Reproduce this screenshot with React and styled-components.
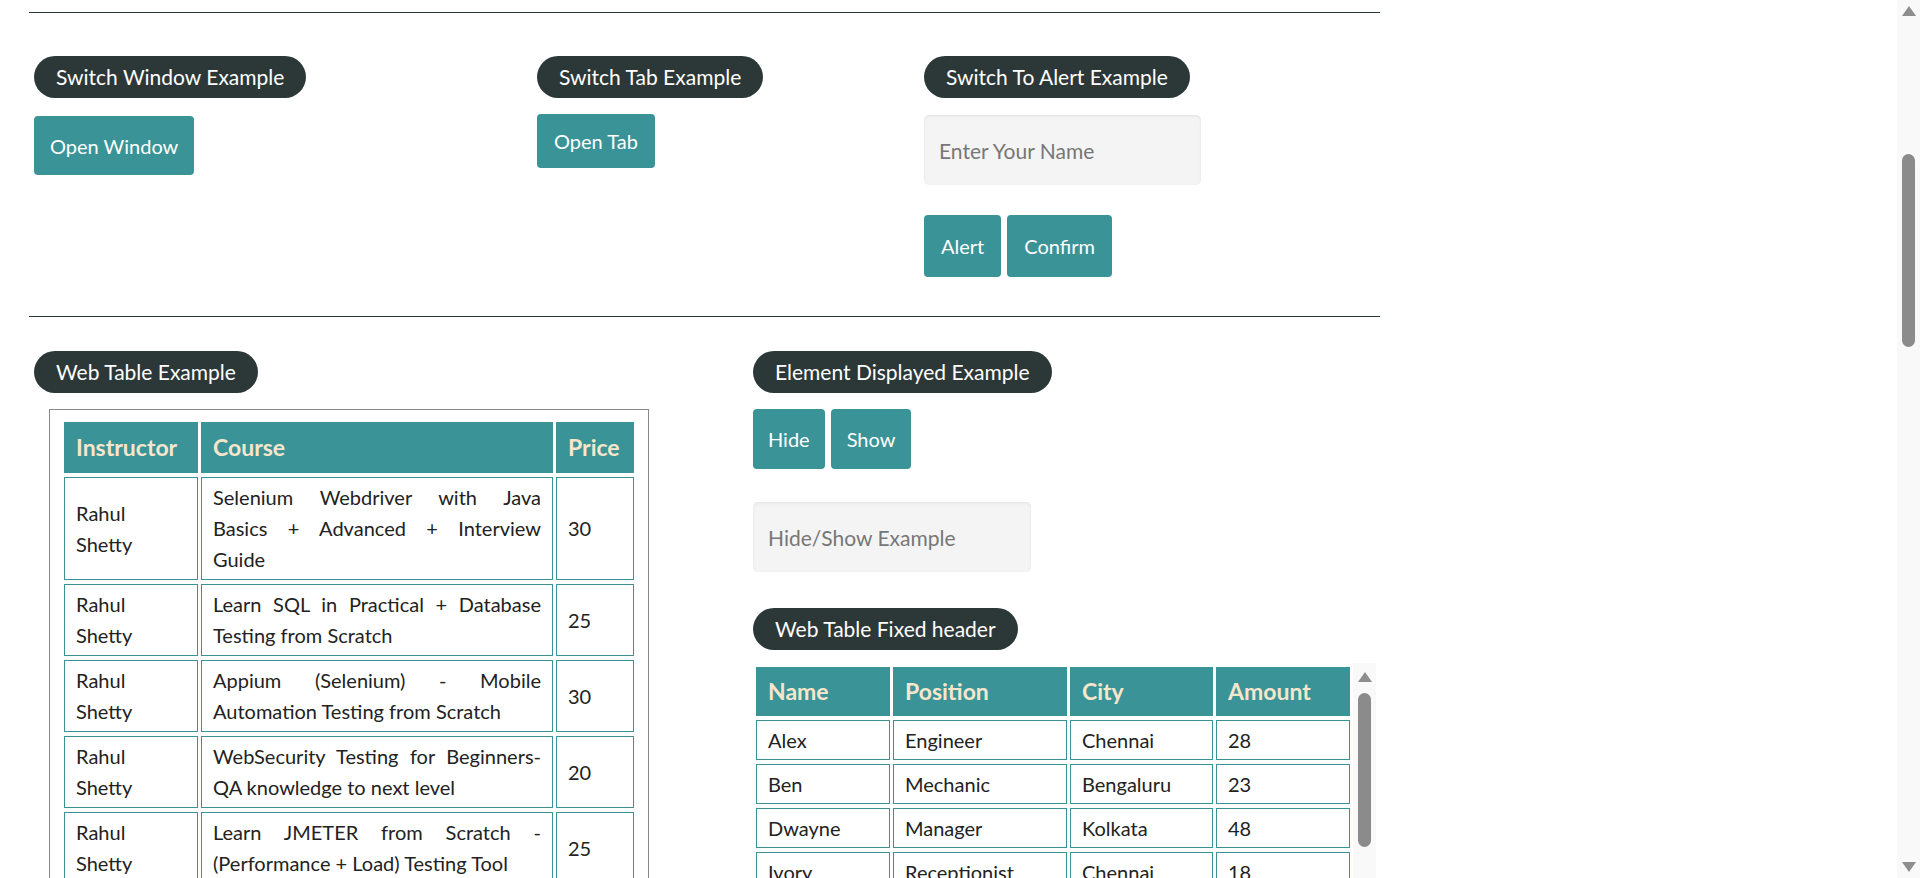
import React from 'react';
import styled, { createGlobalStyle } from 'styled-components';

const GlobalStyle = createGlobalStyle`
  html, body {
    margin: 0;
    padding: 0;
    background: #fff;
  }
  body {
    font-family: Lato, "Liberation Sans", sans-serif;
    font-size: 20px;
    line-height: 31px;
    color: #222;
  }
  * { box-sizing: border-box; }
`;

const Page = styled.div`
  padding: 12px 0 0 29px;
`;

const Container = styled.div`
  width: 1351px;
`;

const Divider = styled.hr`
  margin: 0;
  border: 0;
  border-top: 1px solid #2c3838;
`;

const Section = styled.div`
  display: grid;
  grid-template-columns: ${p => p.$cols};
  align-items: start;
  padding: ${p => p.$pad};
`;

const Column = styled.div`
  display: flex;
  flex-direction: column;
  align-items: flex-start;
`;

const Legend = styled.span`
  display: inline-block;
  height: 42px;
  line-height: 42px;
  padding: 0 22px;
  border-radius: 21px;
  background: #2c3838;
  color: #fff;
  font-size: 21px;
  white-space: nowrap;
  margin-top: ${p => p.$top || 0}px;
`;

const Button = styled.button`
  font-family: inherit;
  font-size: 20px;
  color: #fff;
  background: #399397;
  border: 0;
  border-radius: 4px;
  padding: 0 ${p => p.$px || 15}px;
  height: ${p => p.$h}px;
  cursor: pointer;
`;

const ButtonRow = styled.div`
  display: flex;
  gap: 6px;
  margin-top: ${p => p.$top || 0}px;
`;

const Spaced = styled.div`
  margin-top: ${p => p.$top}px;
`;

const TextInput = styled.input`
  display: block;
  width: ${p => p.$w}px;
  height: 70px;
  margin-top: ${p => p.$top}px;
  padding: 0 15px;
  border: 0;
  border-radius: 5px;
  background: #f4f4f4;
  box-shadow: inset 0 1px 3px rgba(0, 0, 0, 0.08);
  font-family: inherit;
  font-size: 21px;
  color: #222;
  outline: none;
  &::placeholder { color: #777; }
`;

const TableBox = styled.div`
  margin: 16px 0 0 15px;
  padding: 8px 11px 10px;
  border: 1px solid #888;
`;

const Table = styled.table`
  width: ${p => p.$w}px;
  table-layout: fixed;
  border-collapse: separate;
  border-spacing: 3px 4px;

  th {
    background: #399397;
    color: #f7e6cb;
    font-size: 23px;
    line-height: 33px;
    font-weight: bold;
    text-align: left;
    padding: ${p => p.$thPad};
    border: 1px solid #399397;
  }
  td {
    border: 1px solid #399397;
    padding: ${p => p.$tdPad};
    vertical-align: middle;
    line-height: 31px;
  }
`;

const CourseCell = styled.td`
  text-align: justify;
`;

const Line = styled.span`
  display: block;
  text-align: justify;
  text-align-last: ${p => (p.$last ? 'left' : 'justify')};
`;

const ScrollArea = styled.div`
  display: flex;
  width: 623px;
  height: 280px;
  margin-top: 13px;
`;

const Scroller = styled.div`
  width: 600px;
  overflow: hidden;
`;

const Track = styled.div`
  display: flex;
  flex-direction: column;
  align-items: center;
  width: 23px;
  flex: none;
  padding: ${p => p.$padTop || 6}px 0 6px;
  background: #f9f9f9;
`;

const PageTrack = styled(Track)`
  position: fixed;
  top: 0;
  right: 0;
  height: 100vh;
  z-index: 10;
`;

const Arrow = styled.div`
  width: 0;
  height: 0;
  border-left: 7px solid transparent;
  border-right: 7px solid transparent;
  ${p => (p.$down ? 'border-top' : 'border-bottom')}: 10px solid #8e8e8e;
`;

const Thumb = styled.div`
  width: 13px;
  height: ${p => p.$h}px;
  margin-top: ${p => p.$top}px;
  border-radius: 7px;
  background: #8b8b8b;
`;

const Spacer = styled.div`
  flex: 1;
`;

const Total = styled.div`
  margin-top: 12px;
`;

const Frame = styled.div`
  width: 1100px;
  height: 900px;
  margin: 16px 0 0 15px;
  border: 2px inset #ccc;
`;

const Footer = styled.div`
  margin-top: 40px;
  padding: 30px 0 60px;
  background: #2c3838;
  color: #fff;
  text-align: center;
`;

const courses = [
  ['Rahul Shetty', ['Selenium Webdriver with Java', 'Basics + Advanced + Interview', 'Guide'], 30],
  ['Rahul Shetty', ['Learn SQL in Practical + Database', 'Testing from Scratch'], 25],
  ['Rahul Shetty', ['Appium (Selenium) - Mobile', 'Automation Testing from Scratch'], 30],
  ['Rahul Shetty', ['WebSecurity Testing for Beginners-', 'QA knowledge to next level'], 20],
  ['Rahul Shetty', ['Learn JMETER from Scratch -', '(Performance + Load) Testing Tool'], 25],
  ['Rahul Shetty', ['WebServices / REST API Testing', 'with SoapUI'], 35],
  ['Rahul Shetty', ['QA Expert Course :Software Testing +', 'Bugzilla + SQL + Agile'], 25],
  ['Rahul Shetty', ['Master Selenium Automation in', 'simple Python Language'], 25],
  ['Rahul Shetty', ['Advanced Selenium Framework', 'Pageobject, TestNG, Maven,', 'Cucumber'], 20],
  ['Rahul Shetty', ['Write effective QA Resume that will', 'turn to interview call'], 0],
];

const people = [
  ['Alex', 'Engineer', 'Chennai', 28],
  ['Ben', 'Mechanic', 'Bengaluru', 23],
  ['Dwayne', 'Manager', 'Kolkata', 48],
  ['Ivory', 'Receptionist', 'Chennai', 18],
  ['Jack', 'Engineer', 'Pune', 32],
  ['Joe', 'Postman', 'Chennai', 46],
  ['Raymond', 'Businessman', 'Mumbai', 37],
  ['Ronaldo', 'Sportsman', 'Chennai', 31],
  ['Smith', 'Cricketer', 'Delhi', 33],
];

const ScrollBar = ({ as: Wrap = Track, padTop, thumbTop, thumbHeight }) => (
  <Wrap $padTop={padTop}>
    <Arrow />
    <Thumb $top={thumbTop} $h={thumbHeight} />
    <Spacer />
    <Arrow $down />
  </Wrap>
);

const App = () => {
  return (
    <>
      <GlobalStyle />
      <Page>
        <Container>
          <Divider />
          <Section $cols="503px 387px 1fr" $pad="43px 0 39px 5px">
            <Column>
              <Legend>Switch Window Example</Legend>
              <Spaced $top={18}><Button $h={59} $px={16}>Open Window</Button></Spaced>
            </Column>
            <Column>
              <Legend>Switch Tab Example</Legend>
              <Spaced $top={16}><Button $h={54} $px={17}>Open Tab</Button></Spaced>
            </Column>
            <Column>
              <Legend>Switch To Alert Example</Legend>
              <TextInput $w={277} $top={17} placeholder="Enter Your Name" />
              <ButtonRow $top={30}>
                <Button $h={62} $px={17}>Alert</Button>
                <Button $h={62} $px={17}>Confirm</Button>
              </ButtonRow>
            </Column>
          </Section>
          <Divider />
          <Section $cols="719px 1fr" $pad="34px 0 40px 5px">
            <Column>
              <Legend>Web Table Example</Legend>
              <TableBox>
                <Table $w={576} $thPad="8px 11px" $tdPad="4px 11px">
                  <colgroup>
                    <col style={{ width: 134 }} />
                    <col style={{ width: 352 }} />
                    <col style={{ width: 78 }} />
                  </colgroup>
                  <thead>
                    <tr><th>Instructor</th><th>Course</th><th>Price</th></tr>
                  </thead>
                  <tbody>
                    {courses.map((c, i) => (
                      <tr key={i}>
                        <td>{c[0]}</td>
                        <CourseCell>
                          {c[1].map((line, j) => (
                            <Line key={j} $last={j === c[1].length - 1}>{line}</Line>
                          ))}
                        </CourseCell>
                        <td>{c[2]}</td>
                      </tr>
                    ))}
                  </tbody>
                </Table>
              </TableBox>
            </Column>
            <Column>
              <Legend>Element Displayed Example</Legend>
              <ButtonRow $top={16}>
                <Button $h={60}>Hide</Button>
                <Button $h={60} $px={16}>Show</Button>
              </ButtonRow>
              <TextInput $w={278} $top={33} placeholder="Hide/Show Example" />
              <Legend $top={36}>Web Table Fixed header</Legend>
              <ScrollArea>
                <Scroller>
                  <Table $w={600} $thPad="7px 11px 7px" $tdPad="3.5px 11px">
                    <colgroup>
                      <col style={{ width: 134 }} />
                      <col style={{ width: 174 }} />
                      <col style={{ width: 143 }} />
                      <col style={{ width: 134 }} />
                    </colgroup>
                    <thead>
                      <tr><th>Name</th><th>Position</th><th>City</th><th>Amount</th></tr>
                    </thead>
                    <tbody>
                      {people.map((p, i) => (
                        <tr key={i}>
                          {p.map((v, j) => <td key={j}>{v}</td>)}
                        </tr>
                      ))}
                    </tbody>
                  </Table>
                </Scroller>
                <ScrollBar padTop={9} thumbTop={11} thumbHeight={154} />
              </ScrollArea>
              <Total>Total Amount Collected: 296</Total>
            </Column>
          </Section>
          <Divider />
          <Section $cols="1fr" $pad="34px 0 40px 5px">
            <Column>
              <Legend>Mouse Hover Example</Legend>
              <Spaced $top={16}><Button $h={59}>Mouse Hover</Button></Spaced>
            </Column>
          </Section>
          <Divider />
          <Section $cols="1fr" $pad="34px 0 40px 5px">
            <Column>
              <Legend>iFrame Example</Legend>
              <Frame />
            </Column>
          </Section>
        </Container>
        <Footer>© Rahul Shetty Academy</Footer>
      </Page>
      <ScrollBar as={PageTrack} thumbTop={138} thumbHeight={193} />
    </>
  );
};

export default App;
